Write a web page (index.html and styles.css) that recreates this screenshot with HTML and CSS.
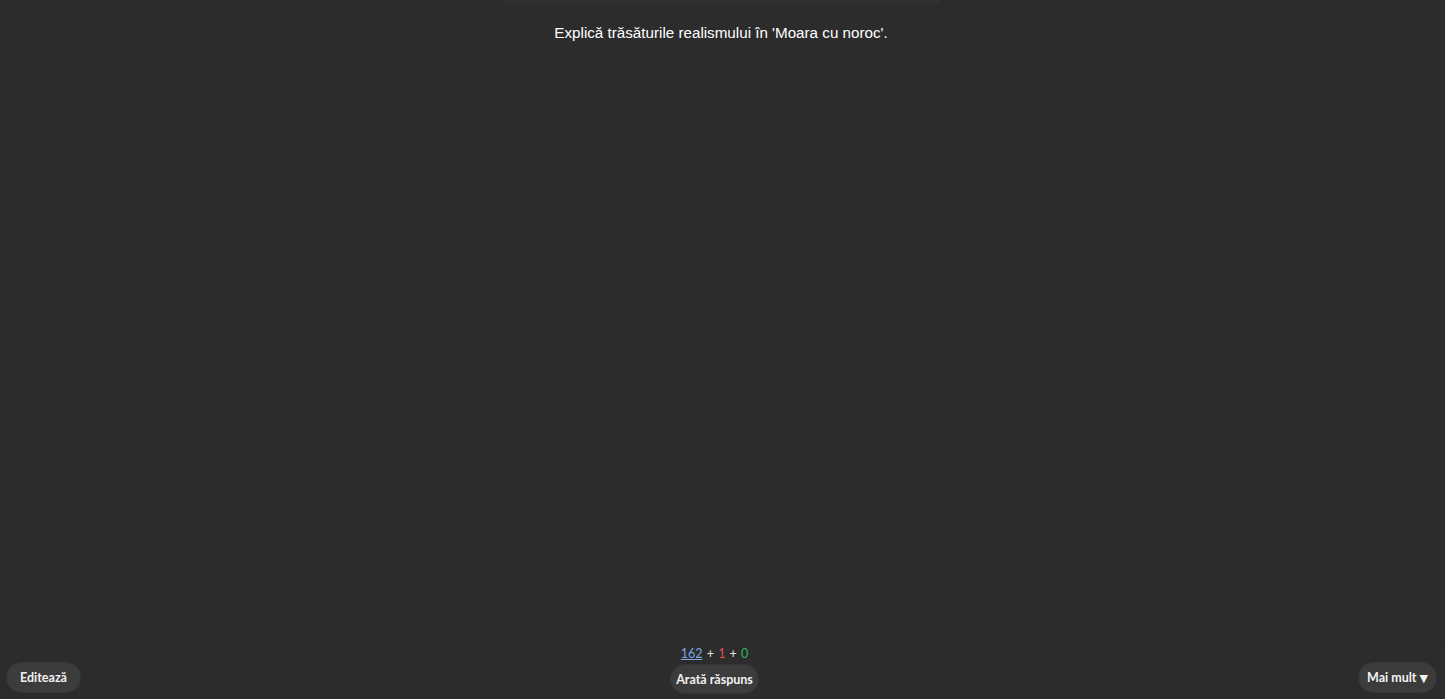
FILE: index.html
```html
<!DOCTYPE html>
<html lang="ro">
<head>
<meta charset="utf-8">
<link rel="stylesheet" href="styles.css">
</head>
<body>
<div class="app">
  <main class="review">
    <div class="topcard"></div>
    <div class="question">Explică trăsăturile realismului în 'Moara cu noroc'.</div>
  </main>
  <footer class="bar">
    <div class="side left"><button class="btn edit">Editează</button></div>
    <div class="middle">
      <div class="counts"><span class="new">162</span> + <span class="lrn">1</span> + <span class="rev">0</span></div>
      <button class="btn answer">Arată răspuns</button>
    </div>
    <div class="side right"><button class="btn more">Mai mult <span class="tri">▼</span></button></div>
  </footer>
</div>
</body>
</html>
```
FILE: styles.css
```css
html, body {
  margin: 0;
  padding: 0;
  background: #2c2c2c;
}
.app {
  height: 699px;
  display: flex;
  flex-direction: column;
}
.review {
  flex: 1;
  display: flex;
  flex-direction: column;
  align-items: center;
  padding-right: 3px;
}
.topcard {
  width: 440px;
  height: 4px;
  background: #303030;
  border-radius: 0 0 8px 8px;
}
.question {
  margin-top: 19px;
  font-family: "Liberation Sans", Arial, sans-serif;
  font-size: 15.2px;
  color: #ffffff;
  line-height: 20px;
}
.bar {
  height: 57px;
  border-top: 1px solid #282828;
  background: #2c2c2c;
  display: flex;
  justify-content: space-between;
  align-items: flex-end;
  font-family: Lato, "Noto Sans", sans-serif;
}
.side {
  display: flex;
  padding-bottom: 6px;
}
.side.left { width: 113px; justify-content: flex-start; padding-left: 6px; }
.side.right { width: 127px; justify-content: flex-end; padding-right: 8px; }
.middle {
  display: flex;
  flex-direction: column;
  align-items: center;
  padding-bottom: 5px;
}
.counts {
  font-size: 12.5px;
  color: #e8e8e8;
  line-height: 16px;
  margin-bottom: 2px;
  word-spacing: 1px;
}
.new { color: #7aa8e0; text-decoration: underline; }
.lrn { color: #e0504f; }
.rev { color: #2fb45f; }
.btn {
  font-family: Lato, "Noto Sans", sans-serif;
  font-weight: 700;
  font-size: 12.5px;
  color: #f2f2f2;
  background: #3c3c3c;
  border: 1px solid #353535;
  border-radius: 15px;
  height: 31px;
  padding: 0;
  text-align: center;
  cursor: pointer;
}
.edit { width: 75px; }
.answer { width: 89px; height: 30px; }
.more { width: 79px; }
.tri { font-family: "DejaVu Sans", sans-serif; font-size: 11px; }
```
